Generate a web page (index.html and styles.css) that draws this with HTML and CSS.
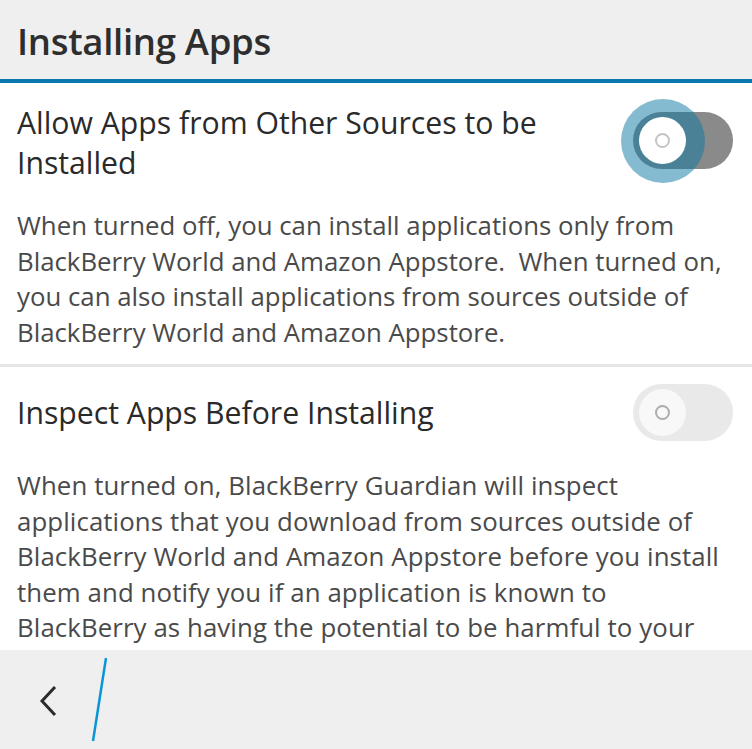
FILE: index.html
```html
<!DOCTYPE html>
<html lang="en">
<head>
    <meta charset="UTF-8">
    <meta name="viewport" content="width=device-width, initial-scale=1.0">
    <title>Installing Apps</title>
    <link rel="stylesheet" href="styles.css">
</head>
<body>
    <div class="screen">
        <!-- Title bar -->
        <header class="title-bar">
            <h1>Installing Apps</h1>
        </header>

        <div class="content">
            <!-- Allow other sources -->
            <section class="setting first">
                <div class="setting-row">
                    <h2 class="setting-title">Allow Apps from Other Sources to be Installed</h2>
                    <div class="toggle toggle-pressed">
                        <span class="halo"></span>
                        <span class="knob"><span class="ring"></span></span>
                    </div>
                </div>
                <p class="setting-desc">When turned off, you can install applications only from BlackBerry World and Amazon Appstore.&nbsp; When turned on, you can also install applications from sources outside of BlackBerry World and Amazon Appstore.</p>
            </section>

            <!-- Inspect apps -->
            <section class="setting second">
                <div class="setting-row">
                    <h2 class="setting-title">Inspect Apps Before Installing</h2>
                    <div class="toggle toggle-disabled">
                        <span class="knob"><span class="ring"></span></span>
                    </div>
                </div>
                <p class="setting-desc condensed">When turned on, BlackBerry Guardian will inspect<br>
                applications that you download from sources outside of<br>
                BlackBerry World and Amazon Appstore before you install<br>
                them and notify you if an application is known to<br>
                BlackBerry as having the potential to be harmful to your</p>
            </section>
        </div>

        <!-- Action bar -->
        <footer class="action-bar">
            <button class="back-btn" type="button" aria-label="Back">
                <svg width="20" height="34" viewBox="0 0 20 34">
                    <path d="M16 3 L3 17 L16 31" fill="none" stroke="#2b2b2b" stroke-width="3"/>
                </svg>
            </button>
            <svg class="slash" width="20" height="86" viewBox="0 0 20 86">
                <line x1="15" y1="1" x2="2" y2="84" stroke="#0a96d6" stroke-width="2.5"/>
            </svg>
        </footer>
    </div>
</body>
</html>
```

FILE: styles.css
```css
body {
    margin: 0;
    font-family: "Open Sans", Arial, sans-serif;
    background: #ffffff;
}

.screen {
    width: 752px;
    height: 749px;
    display: flex;
    flex-direction: column;
    overflow: hidden;
}

/* Title bar */
.title-bar {
    height: 83px;
    background-color: #efefef;
    border-bottom: 4px solid #0a78ad;
    display: flex;
    align-items: center;
    padding-left: 17px;
    padding-top: 2px;
    box-sizing: border-box;
    flex-shrink: 0;
}

.title-bar h1 {
    margin: 0;
    font-size: 36.5px;
    font-weight: 600;
    color: #2e2e2e;
    letter-spacing: -0.3px;
}

/* Settings list */
.content {
    flex: 1;
    overflow: hidden;
}

.setting {
    padding: 0 17px 14px 17px;
    border-bottom: 3px solid #e6e6e6;
}

.setting.first {
    padding-top: 20px;
}

.setting.second {
    padding-top: 17px;
}

.setting-row {
    display: flex;
    align-items: center;
    justify-content: space-between;
}

.setting-title {
    margin: 0;
    font-size: 30.2px;
    font-weight: 400;
    line-height: 40px;
    color: #2a2a2a;
    max-width: 580px;
}

.setting-desc {
    margin: 25px 0 0 0;
    font-size: 25.8px;
    line-height: 35.5px;
    color: #4a4a4a;
}

.condensed {
    margin-top: 27px;
    letter-spacing: 0.1px;
    white-space: nowrap;
}

/* Toggle switch */
.toggle {
    position: relative;
    width: 100px;
    height: 57px;
    border-radius: 29px;
    margin-right: 2px;
    flex-shrink: 0;
}

.toggle-pressed {
    background-color: #8a8a8a;
    margin-bottom: 6px;
}

.toggle-disabled {
    background-color: #e9e9e9;
}

.knob {
    position: absolute;
    left: 6px;
    top: 5px;
    width: 47px;
    height: 47px;
    border-radius: 50%;
    background-color: #ffffff;
    display: flex;
    align-items: center;
    justify-content: center;
}

.toggle-disabled .knob {
    background-color: #f8f8f8;
}

.ring {
    width: 11px;
    height: 11px;
    border-radius: 50%;
    border: 2px solid #c4c4c4;
}

.toggle-disabled .ring {
    border-color: #adadad;
}

.halo {
    position: absolute;
    left: -12px;
    top: -13px;
    width: 84px;
    height: 84px;
    border-radius: 50%;
    background-color: rgba(11, 119, 161, 0.5);
}

/* Action bar */
.action-bar {
    height: 99px;
    background-color: #efefef;
    display: flex;
    align-items: center;
    flex-shrink: 0;
}

.back-btn {
    background: none;
    border: none;
    padding: 0;
    margin-left: 39px;
    margin-top: 2px;
    display: flex;
}

.slash {
    margin-left: 32px;
    margin-top: 1px;
}
```
